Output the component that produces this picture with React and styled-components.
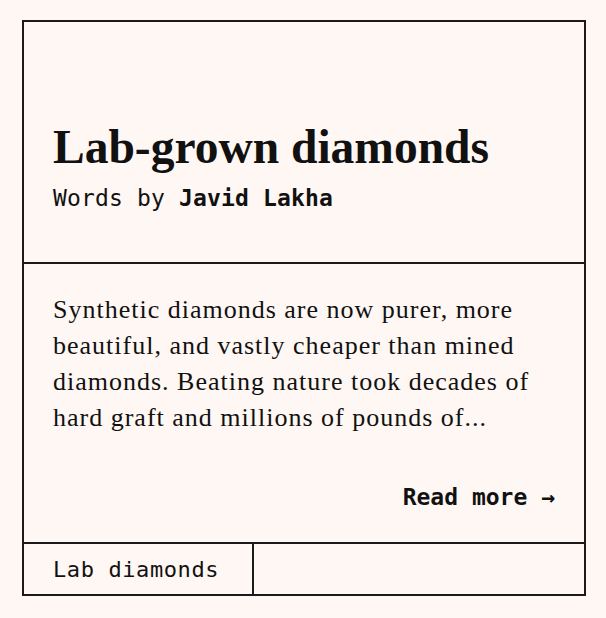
import styled, { createGlobalStyle } from "styled-components";

const GlobalStyle = createGlobalStyle`
  html, body {
    margin: 0;
    padding: 0;
    background: #fff7f3;
  }
`;

const Page = styled.div`
  padding: 20px 20px 22px 22px;
`;

const Card = styled.article`
  width: 560px;
  border: 2px solid #1a1a1a;
  background: #fff7f3;
  color: #111;
`;

const Header = styled.header`
  height: 242px;
  box-sizing: border-box;
  padding: 0 29px 51px;
  display: flex;
  flex-direction: column;
  justify-content: flex-end;
  border-bottom: 2px solid #1a1a1a;
`;

const Title = styled.h2`
  margin: 0 0 12px;
  font-family: "Liberation Serif", serif;
  font-weight: 700;
  font-size: 47.5px;
  line-height: 1.1;
`;

const Byline = styled.p`
  margin: 0;
  font-family: "DejaVu Sans Mono", monospace;
  font-size: 23px;
  letter-spacing: 0.15px;
  & strong {
    font-weight: 700;
  }
`;

const Body = styled.div`
  padding: 28px 29px 32px;
  border-bottom: 2px solid #1a1a1a;
`;

const Excerpt = styled.p`
  margin: 0 0 48px;
  font-family: "Liberation Serif", serif;
  font-size: 26px;
  letter-spacing: 1px;
  line-height: 36px;
`;

const ReadMore = styled.a`
  display: block;
  text-align: right;
  font-family: "DejaVu Sans Mono", monospace;
  font-weight: 700;
  font-size: 23px;
  color: #111;
  text-decoration: none;
`;

const Footer = styled.footer`
  display: flex;
  height: 50px;
`;

const Tag = styled.span`
  width: 230px;
  box-sizing: border-box;
  padding: 0 29px;
  display: flex;
  align-items: center;
  border-right: 2px solid #1a1a1a;
  font-family: "DejaVu Sans Mono", monospace;
  font-size: 22px;
  letter-spacing: 0.6px;
`;

export default function App() {
  return (
    <Page>
      <GlobalStyle />
      <Card>
        <Header>
          <Title>Lab-grown diamonds</Title>
          <Byline>
            Words by <strong>Javid Lakha</strong>
          </Byline>
        </Header>
        <Body>
          <Excerpt>
            Synthetic diamonds are now purer, more beautiful, and vastly
            cheaper than mined diamonds. Beating nature took decades of hard
            graft and millions of pounds of...
          </Excerpt>
          <ReadMore href="#">Read more →</ReadMore>
        </Body>
        <Footer>
          <Tag>Lab diamonds</Tag>
        </Footer>
      </Card>
    </Page>
  );
}
